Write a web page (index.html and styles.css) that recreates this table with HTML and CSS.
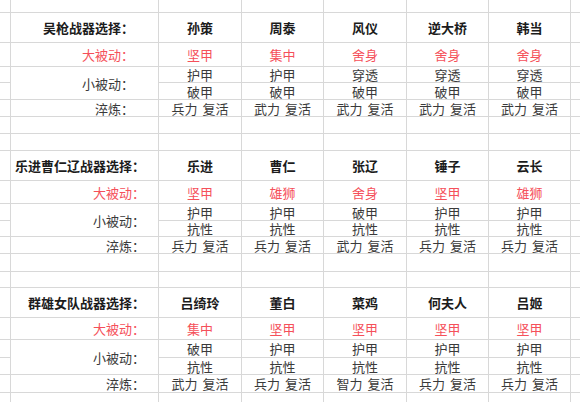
FILE: index.html
```html
<!DOCTYPE html>
<html lang="zh-CN">
<head>
<meta charset="utf-8">
<title>战器选择</title>
<link rel="stylesheet" href="styles.css">
</head>
<body>
<div class="sheet">
  <!-- top blank row -->
  <div class="c"></div><div class="c"></div><div class="c"></div><div class="c"></div><div class="c"></div><div class="c"></div><div class="c"></div><div class="c"></div>

  <!-- section 1 -->
  <div class="c"></div><div class="c lab hd p1">吴枪战器选择：</div><div class="c hd">孙策</div><div class="c hd">周泰</div><div class="c hd">风仪</div><div class="c hd">逆大桥</div><div class="c hd">韩当</div><div class="c"></div>
  <div class="c"></div><div class="c lab red p1">大被动：</div><div class="c red">坚甲</div><div class="c red">集中</div><div class="c red">舍身</div><div class="c red">舍身</div><div class="c red">舍身</div><div class="c"></div>
  <div class="c"></div><div class="c lab p1 span2">小被动：</div><div class="c">护甲</div><div class="c">护甲</div><div class="c">穿透</div><div class="c">穿透</div><div class="c">穿透</div><div class="c"></div>
  <div class="c"></div><div class="c">破甲</div><div class="c">破甲</div><div class="c">破甲</div><div class="c">破甲</div><div class="c">破甲</div><div class="c"></div>
  <div class="c"></div><div class="c lab p1">淬炼：</div><div class="c">兵力 复活</div><div class="c">武力 复活</div><div class="c">武力 复活</div><div class="c">武力 复活</div><div class="c">武力 复活</div><div class="c"></div>
  <div class="c"></div><div class="c"></div><div class="c"></div><div class="c"></div><div class="c"></div><div class="c"></div><div class="c"></div><div class="c"></div>
  <div class="c"></div><div class="c"></div><div class="c"></div><div class="c"></div><div class="c"></div><div class="c"></div><div class="c"></div><div class="c"></div>

  <!-- section 2 -->
  <div class="c"></div><div class="c lab hd p2">乐进曹仁辽战器选择：</div><div class="c hd">乐进</div><div class="c hd">曹仁</div><div class="c hd">张辽</div><div class="c hd">锤子</div><div class="c hd">云长</div><div class="c"></div>
  <div class="c"></div><div class="c lab red p2">大被动：</div><div class="c red">坚甲</div><div class="c red">雄狮</div><div class="c red">舍身</div><div class="c red">坚甲</div><div class="c red">雄狮</div><div class="c"></div>
  <div class="c"></div><div class="c lab p2 span2">小被动：</div><div class="c">护甲</div><div class="c">护甲</div><div class="c">破甲</div><div class="c">护甲</div><div class="c">护甲</div><div class="c"></div>
  <div class="c"></div><div class="c">抗性</div><div class="c">抗性</div><div class="c">抗性</div><div class="c">抗性</div><div class="c">抗性</div><div class="c"></div>
  <div class="c"></div><div class="c lab p2">淬炼：</div><div class="c">兵力 复活</div><div class="c">兵力 复活</div><div class="c">武力 复活</div><div class="c">兵力 复活</div><div class="c">兵力 复活</div><div class="c"></div>
  <div class="c"></div><div class="c"></div><div class="c"></div><div class="c"></div><div class="c"></div><div class="c"></div><div class="c"></div><div class="c"></div>
  <div class="c"></div><div class="c"></div><div class="c"></div><div class="c"></div><div class="c"></div><div class="c"></div><div class="c"></div><div class="c"></div>

  <!-- section 3 -->
  <div class="c"></div><div class="c lab hd p2">群雄女队战器选择：</div><div class="c hd">吕绮玲</div><div class="c hd">董白</div><div class="c hd">菜鸡</div><div class="c hd">何夫人</div><div class="c hd">吕姬</div><div class="c"></div>
  <div class="c"></div><div class="c lab red p2">大被动：</div><div class="c red">集中</div><div class="c red">坚甲</div><div class="c red">坚甲</div><div class="c red">坚甲</div><div class="c red">坚甲</div><div class="c"></div>
  <div class="c"></div><div class="c lab p2 span2">小被动：</div><div class="c">破甲</div><div class="c">护甲</div><div class="c">护甲</div><div class="c">护甲</div><div class="c">护甲</div><div class="c"></div>
  <div class="c"></div><div class="c">抗性</div><div class="c">抗性</div><div class="c">抗性</div><div class="c">抗性</div><div class="c">抗性</div><div class="c"></div>
  <div class="c"></div><div class="c lab p2">淬炼：</div><div class="c">武力 复活</div><div class="c">兵力 复活</div><div class="c">智力 复活</div><div class="c">兵力 复活</div><div class="c">兵力 复活</div><div class="c"></div>
  <div class="c"></div><div class="c"></div><div class="c"></div><div class="c"></div><div class="c"></div><div class="c"></div><div class="c"></div><div class="c"></div>
</div>
</body>
</html>
```
FILE: styles.css
```css
html, body {
  margin: 0;
  padding: 0;
  background: #ffffff;
  overflow: hidden;
}

.sheet {
  width: 580px;
  height: 402px;
  overflow: hidden;
  display: grid;
  grid-template-columns: 10px 147px 82px 81px 82px 81px 81px 1fr;
  grid-template-rows: 12px 29px 23px 15px 16px 16px 16px 16px 29px 22px 16px 15px 16px 17px 15px 29px 21px 17px 16px 17px 20px;
  gap: 1px;
  background: #d8d8d8;
  font-family: "Noto Sans CJK SC", "Noto Sans", sans-serif;
  font-size: 13px;
  color: #3a3a3a;
}

.c {
  background: #ffffff;
  display: flex;
  align-items: center;
  justify-content: center;
  line-height: 1;
  white-space: pre;
  word-spacing: 2px;
  overflow: visible;
}

.lab {
  justify-content: flex-end;
}

.p1 {
  padding-right: 24px;
}

.p2 {
  padding-right: 13px;
}

.span2 {
  grid-row: span 2;
}

.hd {
  font-weight: 700;
  color: #1c1c1c;
}

.red {
  color: #f5505a;
}
```
